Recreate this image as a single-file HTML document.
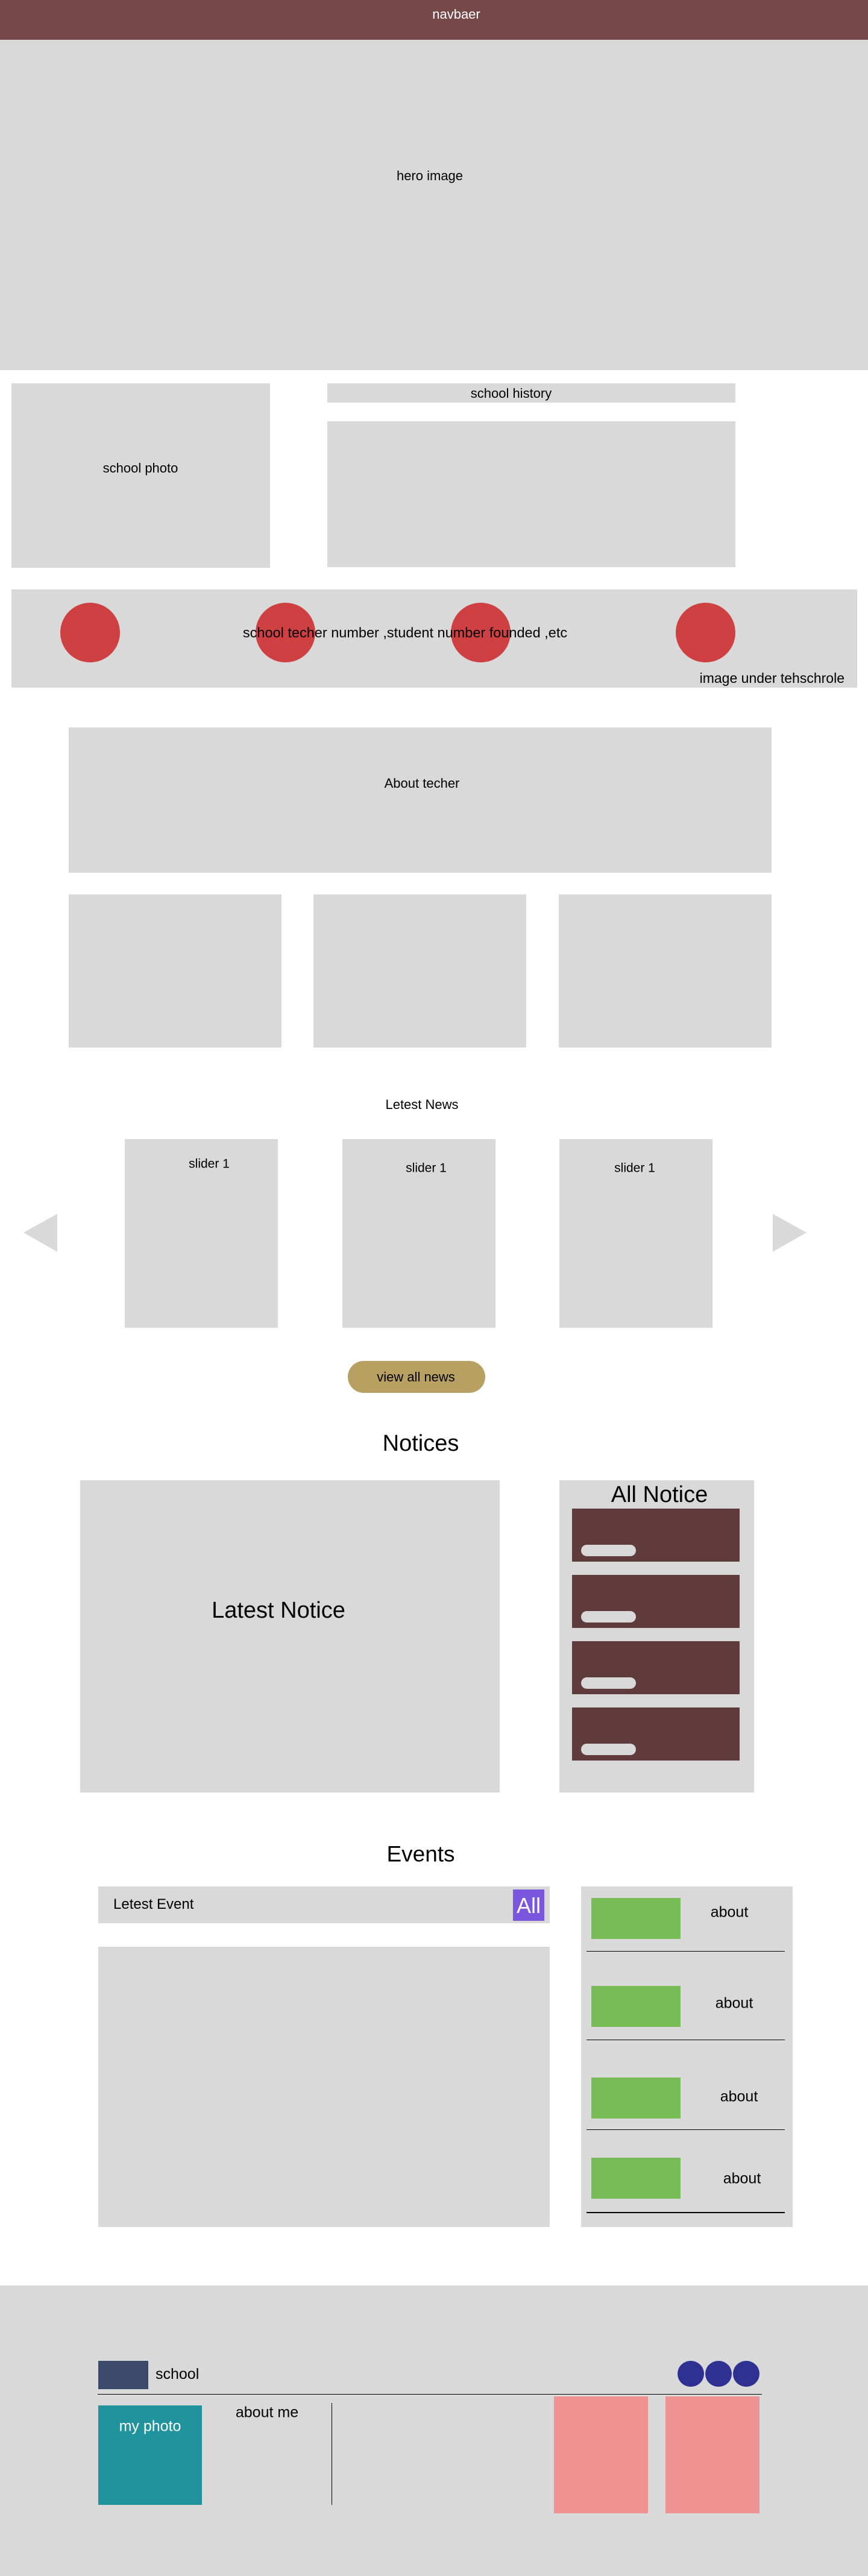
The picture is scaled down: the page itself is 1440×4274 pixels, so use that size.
<!DOCTYPE html>
<html><head><meta charset="utf-8">
<style>
*{margin:0;padding:0;box-sizing:border-box}
body{width:1440px;height:4274px;position:relative;background:#fff;font-family:"Liberation Sans",Arial,sans-serif;color:#000;overflow:hidden}
.a{position:absolute}
.g{background:#d9d9d9}
.t{position:absolute;transform:translate(-50%,-50%);white-space:nowrap;line-height:1}
.c{border-radius:50%}
</style></head><body>
<div class="a" style="left:0;top:0;width:1440px;height:66px;background:#76484a"></div>
<div class="t" style="left:757px;top:24px;font-size:22px;color:#fff">navbaer</div>
<div class="a g" style="left:0;top:66px;width:1440px;height:548px"></div>
<div class="t" style="left:713px;top:292px;font-size:22px">hero image</div>

<div class="a g" style="left:19px;top:636px;width:429px;height:306px"></div>
<div class="t" style="left:233px;top:777px;font-size:22px">school photo</div>
<div class="a g" style="left:543px;top:636px;width:677px;height:32px"></div>
<div class="t" style="left:848px;top:653px;font-size:22px">school history</div>
<div class="a g" style="left:543px;top:699px;width:677px;height:242px"></div>

<div class="a g" style="left:19px;top:978px;width:1403px;height:163px"></div>
<div class="a c" style="left:100px;top:1000px;width:99px;height:99px;background:#cf4042"></div>
<div class="a c" style="left:424px;top:1000px;width:99px;height:99px;background:#cf4042"></div>
<div class="a c" style="left:748px;top:1000px;width:99px;height:99px;background:#cf4042"></div>
<div class="a c" style="left:1121px;top:1000px;width:99px;height:99px;background:#cf4042"></div>
<div class="t" style="left:672px;top:1050px;font-size:23.5px">school techer number ,student number founded ,etc</div>
<div class="a" style="right:39px;top:1114px;font-size:23px;line-height:1;white-space:nowrap">image under tehschrole</div>

<div class="a g" style="left:114px;top:1207px;width:1166px;height:241px"></div>
<div class="t" style="left:700px;top:1300px;font-size:22px">About techer</div>
<div class="a g" style="left:114px;top:1484px;width:353px;height:254px"></div>
<div class="a g" style="left:520px;top:1484px;width:353px;height:254px"></div>
<div class="a g" style="left:927px;top:1484px;width:353px;height:254px"></div>

<div class="t" style="left:700px;top:1833px;font-size:22px">Letest News</div>
<div class="a g" style="left:207px;top:1890px;width:254px;height:313px"></div>
<div class="a g" style="left:568px;top:1890px;width:254px;height:313px"></div>
<div class="a g" style="left:928px;top:1890px;width:254px;height:313px"></div>
<div class="t" style="left:347px;top:1931px;font-size:21px">slider 1</div>
<div class="t" style="left:707px;top:1938px;font-size:21px">slider 1</div>
<div class="t" style="left:1053px;top:1938px;font-size:21px">slider 1</div>
<svg class="a" style="left:0;top:0" width="1440" height="2100">
<polygon points="95,2014 95,2077 39,2045" fill="#d9d9d9"/>
<polygon points="1282,2014 1282,2077 1338,2045" fill="#d9d9d9"/>
</svg>

<div class="a" style="left:577px;top:2258px;width:228px;height:53px;border-radius:27px;background:#b8a063"></div>
<div class="t" style="left:690px;top:2285px;font-size:22px">view all news</div>

<div class="t" style="left:698px;top:2395px;font-size:38px">Notices</div>
<div class="a g" style="left:133px;top:2456px;width:696px;height:518px"></div>
<div class="t" style="left:462px;top:2672px;font-size:38px">Latest Notice</div>
<div class="a g" style="left:928px;top:2456px;width:323px;height:518px"></div>
<div class="t" style="left:1094px;top:2480px;font-size:38px">All Notice</div>
<div class="a" style="left:949px;top:2503px;width:278px;height:88px;background:#5f3b3b"></div>
<div class="a" style="left:949px;top:2613px;width:278px;height:88px;background:#5f3b3b"></div>
<div class="a" style="left:949px;top:2723px;width:278px;height:88px;background:#5f3b3b"></div>
<div class="a" style="left:949px;top:2833px;width:278px;height:88px;background:#5f3b3b"></div>
<div class="a g" style="left:964px;top:2563px;width:91px;height:19px;border-radius:10px"></div>
<div class="a g" style="left:964px;top:2673px;width:91px;height:19px;border-radius:10px"></div>
<div class="a g" style="left:964px;top:2783px;width:91px;height:19px;border-radius:10px"></div>
<div class="a g" style="left:964px;top:2893px;width:91px;height:19px;border-radius:10px"></div>

<div class="t" style="left:698px;top:3076px;font-size:37px">Events</div>
<div class="a g" style="left:163px;top:3130px;width:749px;height:61px"></div>
<div class="a" style="left:188px;top:3148px;font-size:24px;line-height:1">Letest Event</div>
<div class="a" style="left:851px;top:3135px;width:52px;height:52px;background:#7b57e0"></div>
<div class="t" style="left:877px;top:3162px;font-size:36px;color:#fff">All</div>
<div class="a g" style="left:163px;top:3230px;width:749px;height:465px"></div>

<div class="a g" style="left:964px;top:3130px;width:351px;height:565px"></div>
<div class="a" style="left:981px;top:3149px;width:148px;height:68px;background:#77bc56"></div>
<div class="a" style="left:981px;top:3295px;width:148px;height:68px;background:#77bc56"></div>
<div class="a" style="left:981px;top:3447px;width:148px;height:68px;background:#77bc56"></div>
<div class="a" style="left:981px;top:3580px;width:148px;height:68px;background:#77bc56"></div>
<div class="t" style="left:1210px;top:3173px;font-size:25px">about</div>
<div class="t" style="left:1218px;top:3324px;font-size:25px">about</div>
<div class="t" style="left:1226px;top:3479px;font-size:25px">about</div>
<div class="t" style="left:1231px;top:3615px;font-size:25px">about</div>
<div class="a" style="left:973px;top:3237px;width:329px;height:1px;background:#000"></div>
<div class="a" style="left:973px;top:3384px;width:329px;height:1px;background:#000"></div>
<div class="a" style="left:973px;top:3533px;width:329px;height:1px;background:#000"></div>
<div class="a" style="left:973px;top:3670px;width:329px;height:2px;background:#000"></div>

<div class="a g" style="left:0;top:3792px;width:1440px;height:482px"></div>
<div class="a" style="left:163px;top:3917px;width:83px;height:47px;background:#3b4a6b"></div>
<div class="a" style="left:258px;top:3927px;font-size:25px;line-height:1">school</div>
<div class="a c" style="left:1124px;top:3917px;width:44px;height:43px;background:#2e3192"></div>
<div class="a c" style="left:1170px;top:3917px;width:44px;height:43px;background:#2e3192"></div>
<div class="a c" style="left:1216px;top:3917px;width:44px;height:43px;background:#2e3192"></div>
<div class="a" style="left:162px;top:3972px;width:1102px;height:1px;background:#000"></div>
<div class="a" style="left:163px;top:3991px;width:172px;height:165px;background:#20939c"></div>
<div class="t" style="left:249px;top:4026px;font-size:25px;color:#fff">my photo</div>
<div class="t" style="left:443px;top:4003px;font-size:25px">about me</div>
<div class="a" style="left:550px;top:3987px;width:1px;height:169px;background:#000"></div>
<div class="a" style="left:919px;top:3976px;width:156px;height:194px;background:#ee9391"></div>
<div class="a" style="left:1104px;top:3976px;width:156px;height:194px;background:#ee9391"></div>
</body></html>
